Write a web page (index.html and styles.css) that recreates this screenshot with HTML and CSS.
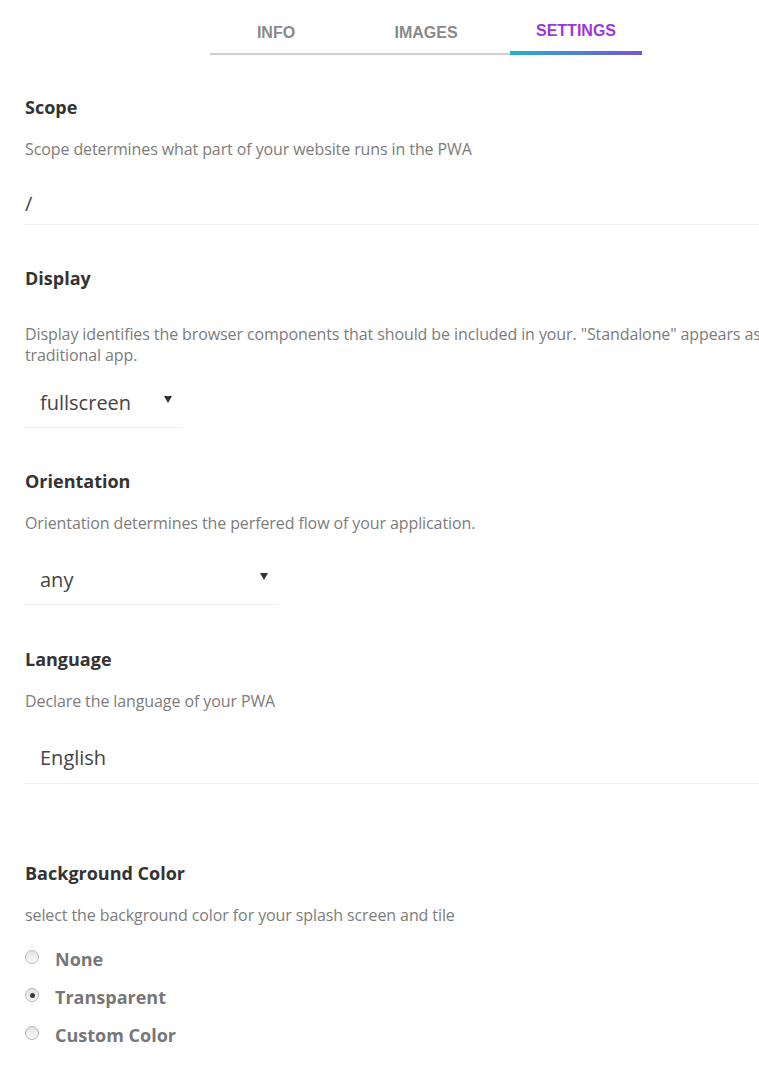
FILE: index.html
```html
<!DOCTYPE html>
<html lang="en">
<head>
<meta charset="utf-8">
<title>Settings</title>
<link rel="stylesheet" href="styles.css">
</head>
<body>
<nav class="tabs">
  <div class="tab">INFO</div>
  <div class="tab">IMAGES</div>
  <div class="tab tab--active">SETTINGS</div>
</nav>

<main class="content">
  <section class="section section--first">
    <h2 class="heading">Scope</h2>
    <p class="desc">Scope determines what part of your website runs in the PWA</p>
    <div class="field field--plain">/</div>
  </section>

  <section class="section">
    <h2 class="heading">Display</h2>
    <p class="desc desc--display">Display identifies the browser components that should be included in your. "Standalone" appears as a traditional app.</p>
    <div class="field select select--small field--display">
      <span>fullscreen</span>
      <span class="arrow"></span>
    </div>
  </section>

  <section class="section">
    <h2 class="heading">Orientation</h2>
    <p class="desc">Orientation determines the perfered flow of your application.</p>
    <div class="field select select--wide">
      <span>any</span>
      <span class="arrow"></span>
    </div>
  </section>

  <section class="section section--lang">
    <h2 class="heading">Language</h2>
    <p class="desc">Declare the language of your PWA</p>
    <div class="field field--padded">English</div>
  </section>

  <section class="section section--spaced">
    <h2 class="heading">Background Color</h2>
    <p class="desc">select the background color for your splash screen and tile</p>
    <div class="radios">
      <label class="radio"><span class="dot"></span>None</label>
      <label class="radio"><span class="dot dot--checked"></span>Transparent</label>
      <label class="radio"><span class="dot"></span>Custom Color</label>
    </div>
  </section>
</main>
</body>
</html>
```

FILE: styles.css
```css
html, body {
  margin: 0;
  padding: 0;
  background: #fff;
  overflow: hidden;
}

body {
  font-family: "Open Sans", "Noto Sans", sans-serif;
  width: 759px;
  height: 1066px;
}

.tabs {
  display: flex;
  gap: 18px;
  margin-left: 210px;
  width: 432px;
  border-bottom: 2px solid #d0d0d0;
}

.tab {
  position: relative;
  width: 132px;
  text-align: center;
  font-family: "Liberation Sans", Arial, sans-serif;
  font-weight: bold;
  font-size: 16px;
  line-height: 18px;
  padding: 24px 0 11px;
  color: #8a8a8a;
}

.tab--active {
  color: #9a38dc;
  padding: 22px 0 13px;
}

.tab--active::after {
  content: "";
  position: absolute;
  left: 0;
  right: 0;
  bottom: -2px;
  height: 4px;
  background: linear-gradient(90deg, #25b2c6, #7b52d2);
}

.content {
  padding-left: 25px;
  width: 775px;
}

.section {
  margin-top: 41px;
}

.section--first {
  margin-top: 40px;
}

.section--lang {
  margin-top: 42px;
}

.section--spaced {
  margin-top: 77px;
}

.heading {
  margin: 0;
  font-size: 18px;
  line-height: 24px;
  font-weight: 700;
  color: #333;
}

.desc {
  margin: 20px 0 0;
  font-size: 16px;
  line-height: 21px;
  color: #7c7c7c;
  letter-spacing: -0.1px;
}

.desc--display {
  margin-top: 34px;
}

.field {
  margin-top: 21px;
  height: 50px;
  line-height: 50px;
  font-size: 20px;
  color: #444;
  border-bottom: 1px solid #eeeeee;
}

.field--plain {
  height: 40px;
  line-height: 40px;
  margin-top: 24px;
}

.field--padded {
  padding-left: 15px;
}

.field--display {
  margin-top: 12px;
}

.select {
  display: flex;
  justify-content: space-between;
  align-items: center;
  padding-left: 15px;
  padding-right: 10px;
  box-sizing: border-box;
}

.select--small {
  width: 157px;
}

.select--wide {
  width: 253px;
}

.arrow {
  width: 0;
  height: 0;
  border-left: 4px solid transparent;
  border-right: 4px solid transparent;
  border-top: 7px solid #333;
  margin-top: -6px;
}

.radios {
  margin-top: 14px;
  display: flex;
  flex-direction: column;
}

.radio {
  display: flex;
  align-items: center;
  height: 38px;
  font-size: 18px;
  font-weight: 700;
  color: #777;
}

.dot {
  position: relative;
  width: 12px;
  height: 12px;
  border-radius: 50%;
  border: 1px solid #b9b9b9;
  background: linear-gradient(180deg, #e2e2e2, #f9f9f9);
  margin-right: 16px;
  margin-top: -4px;
  box-sizing: content-box;
}

.dot--checked::after {
  content: "";
  position: absolute;
  left: 3.5px;
  top: 3.5px;
  width: 5px;
  height: 5px;
  border-radius: 50%;
  background: #3a3a3a;
}
```
